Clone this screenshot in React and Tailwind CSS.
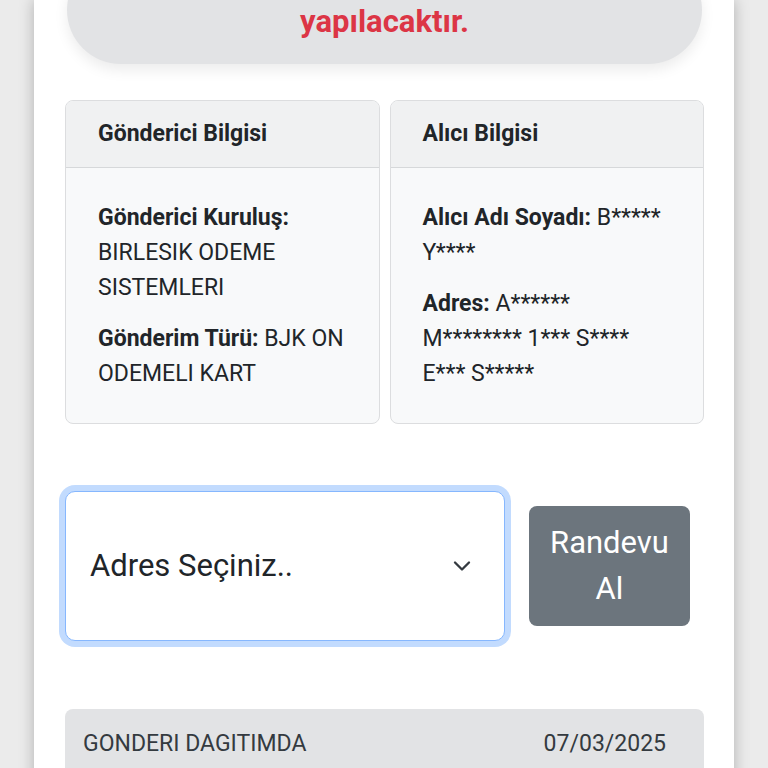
import { ChevronDown } from "lucide-react"

function InfoCard({ title, children }) {
    return (
        <div className="rounded-lg border border-[#dcdddf] bg-[#f8f9fa] overflow-hidden">
            <div className="bg-[#f0f1f2] border-b border-[#d6d8da] px-8 py-5 text-[23px] leading-[26px] font-bold text-[#212529]">
                {title}
            </div>
            <div className="p-8 flex flex-col gap-4 text-[23px] leading-[35px] text-[#212529]">{children}</div>
        </div>
    )
}

export default function App() {
    return (
        <div className="h-[768px] overflow-hidden bg-[#ebebeb] font-['Roboto',sans-serif]">
            <div className="mx-[34px] min-h-full flex flex-col bg-white shadow-[0_0_14px_rgba(0,0,0,0.25)] pl-[31px] pr-[30px]">
                <div className="-mt-[44px] mx-[2px] rounded-[56px] bg-[#e2e3e5] pb-5 text-center text-[31px] leading-[44px] font-bold text-[#dc3545] shadow-[0_6px_14px_rgba(0,0,0,0.08)]">
                    <div>Teslimat adresinize</div>
                    <div>yapılacaktır.</div>
                </div>

                <div className="mt-9 grid grid-cols-2 gap-[10px]">
                    <InfoCard title="Gönderici Bilgisi">
                        <p>
                            <b>Gönderici Kuruluş:</b> BIRLESIK ODEME SISTEMLERI
                        </p>
                        <p>
                            <b>Gönderim Türü:</b> BJK ON ODEMELI KART
                        </p>
                    </InfoCard>
                    <InfoCard title="Alıcı Bilgisi">
                        <p>
                            <b>Alıcı Adı Soyadı:</b> B***** Y****
                        </p>
                        <p>
                            <b>Adres:</b> A****** M******** 1*** S**** E*** S*****
                        </p>
                    </InfoCard>
                </div>

                <div className="mt-[67px] flex items-center gap-6">
                    <div className="w-[440px] h-[150px] shrink-0 flex items-center justify-between rounded-[10px] border border-[#86b7fe] bg-white pl-6 pr-7 ring-[6px] ring-[#0d6efd]/25">
                        <span className="text-[31px] text-[#212529]">Adres Seçiniz..</span>
                        <ChevronDown className="size-7 text-[#343a40]" strokeWidth={2} />
                    </div>
                    <button className="w-[161px] h-[120px] rounded-lg bg-[#6c757d] text-white text-[31px] leading-[46px]">
                        Randevu
                        <br />
                        Al
                    </button>
                </div>

                <div className="mt-[68px] h-[120px] rounded-t-lg bg-[#e2e3e5] pl-[18px] pr-[38px] pt-[21px] flex justify-between text-[23px] leading-[28px] text-[#343a40]">
                    <span>GONDERI DAGITIMDA</span>
                    <span>07/03/2025</span>
                </div>
            </div>
        </div>
    )
}
